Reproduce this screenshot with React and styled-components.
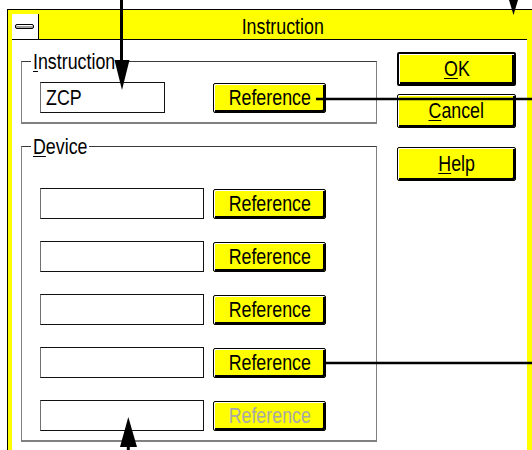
import styled, { createGlobalStyle } from 'styled-components'

const GlobalStyle = createGlobalStyle`
     html, body {
          margin: 0;
          padding: 0;
          background: #ffffff;
          overflow: hidden;
     }
     #root {
          position: relative;
          width: 532px;
          height: 450px;
          overflow: hidden;
     }
`

const font = `"Liberation Sans", Arial, sans-serif`

// the dialog font is a narrow one, so squeeze the text
const Narrow = styled.span`
     display: inline-block;
     white-space: nowrap;
     transform: scaleX(0.81);
     transform-origin: ${({ origin }) => origin || 'center'};
     & u {
          text-underline-offset: 2px;
          text-decoration-thickness: 1px;
     }
`

const Window = styled.div`
     box-sizing: border-box;
     margin: 9px 0 0 7px;
     width: 529px;
     height: 460px;
     background: #ffff00;
     border: 1px solid #000;
     padding: 4px 8px 0 4px;
     display: flex;
     flex-direction: column;
     font-family: ${font};
     font-size: 22px;
`
const TitleBar = styled.div`
     display: flex;
     height: 25px;
     border-bottom: 1px solid #000;
`
const SystemBox = styled.div`
     width: 26px;
     background: #fff;
     border-right: 1px solid #000;
     display: flex;
     align-items: center;
     justify-content: center;
     & span {
          display: block;
          width: 17px;
          height: 3px;
          border: 1px solid #000;
          border-radius: 2px;
          background: #a0a0a0;
          box-shadow: inset 0 1px 0 #fff;
          margin-right: 2px;
     }
`
const Title = styled.div`
     flex: 1;
     display: flex;
     align-items: center;
     justify-content: center;
     color: #000;
     line-height: 25px;
`
const Client = styled.div`
     flex: 1;
     background: #fff;
     display: flex;
     align-items: flex-start;
     padding-left: 9px;
`
const LeftColumn = styled.div`
     display: flex;
     flex-direction: column;
     gap: 22px;
     width: 356px;
     padding-top: 21px;
`
const Group = styled.div`
     position: relative;
     box-sizing: border-box;
     height: ${({ height }) => height}px;
     border: 1px solid #808080;
     border-top-color: #3a3a3a;
     border-bottom-width: 2px;
     padding: ${({ pad }) => pad};
     display: flex;
     flex-direction: column;
     gap: 22px;
`
const Legend = styled.div`
     position: absolute;
     top: -11px;
     left: 9px;
     width: ${({ width }) => width}px;
     padding: 0 2px;
     background: #fff;
     line-height: 22px;
     color: #000;
`
const Row = styled.div`
     display: grid;
     grid-template-columns: 173px 113px;
     align-items: start;
`
const Field = styled.div`
     box-sizing: border-box;
     width: ${({ width }) => width}px;
     height: 31px;
     border: 1px solid #111;
     border-left-color: #707070;
     padding-left: 5px;
     display: flex;
     align-items: center;
     color: #000;
`
const Button = styled.button`
     box-sizing: border-box;
     width: ${({ wide }) => (wide ? 119 : 113)}px;
     height: ${({ wide }) => (wide ? 34 : 30)}px;
     margin-top: ${({ offset }) => offset || 0}px;
     padding: 0;
     background: #ffff00;
     border: ${({ isDefault }) => (isDefault ? 2 : 1)}px solid #000;
     border-radius: 2px;
     box-shadow: inset 1px 1px 0 #fff, inset -2px -2px 0 #000;
     font-family: ${font};
     font-size: 22px;
     line-height: 24px;
     color: ${({ disabled }) => (disabled ? '#a8a8a8' : '#000')};
     display: flex;
     align-items: center;
     justify-content: center;
`
const RightColumn = styled.div`
     display: flex;
     flex-direction: column;
     margin-left: 20px;
     padding-top: 12px;
`
const Overlay = styled.svg`
     position: absolute;
     left: 0;
     top: 0;
     pointer-events: none;
`

const devices = [false, false, false, false, true]

function App() {
     return (
          <>
               <GlobalStyle />
               <Window>
                    <TitleBar>
                         <SystemBox>
                              <span />
                         </SystemBox>
                         <Title>
                              <Narrow>Instruction</Narrow>
                         </Title>
                    </TitleBar>
                    <Client>
                         <LeftColumn>
                              <Group height={63} pad="20px 0 0 18px">
                                   <Legend width={84}>
                                        <Narrow origin="left">
                                             <u>I</u>nstruction
                                        </Narrow>
                                   </Legend>
                                   <Row>
                                        <Field width={125}>
                                             <Narrow origin="left">ZCP</Narrow>
                                        </Field>
                                        <Button offset={1}>
                                             <Narrow>Reference</Narrow>
                                        </Button>
                                   </Row>
                              </Group>
                              <Group height={296} pad="41px 0 0 18px">
                                   <Legend width={54}>
                                        <Narrow origin="left">
                                             <u>D</u>evice
                                        </Narrow>
                                   </Legend>
                                   {devices.map((disabled, i) => (
                                        <Row key={i}>
                                             <Field width={164} />
                                             <Button offset={1} disabled={disabled}>
                                                  <Narrow>Reference</Narrow>
                                             </Button>
                                        </Row>
                                   ))}
                              </Group>
                         </LeftColumn>
                         <RightColumn>
                              <Button wide isDefault>
                                   <Narrow>
                                        <u>O</u>K
                                   </Narrow>
                              </Button>
                              <Button wide offset={8}>
                                   <Narrow>
                                        <u>C</u>ancel
                                   </Narrow>
                              </Button>
                              <Button wide offset={19}>
                                   <Narrow>
                                        <u>H</u>elp
                                   </Narrow>
                              </Button>
                         </RightColumn>
                    </Client>
               </Window>
               <Overlay width="532" height="450" viewBox="0 0 532 450">
                    <line x1="121.5" y1="0" x2="121.5" y2="62" stroke="#000" strokeWidth="3" />
                    <polygon points="114.5,60 129.5,60 122,90" fill="#000" />
                    <polygon points="509,0 518,0 513.5,15" fill="#000" />
                    <line x1="316" y1="99" x2="532" y2="99" stroke="#000" strokeWidth="2.5" />
                    <line x1="326" y1="363" x2="532" y2="363" stroke="#000" strokeWidth="2.5" />
                    <polygon points="128.3,417 120,447 137,447" fill="#000" />
                    <line x1="128.3" y1="446" x2="128.3" y2="450" stroke="#000" strokeWidth="3" />
               </Overlay>
          </>
     )
}

export default App
